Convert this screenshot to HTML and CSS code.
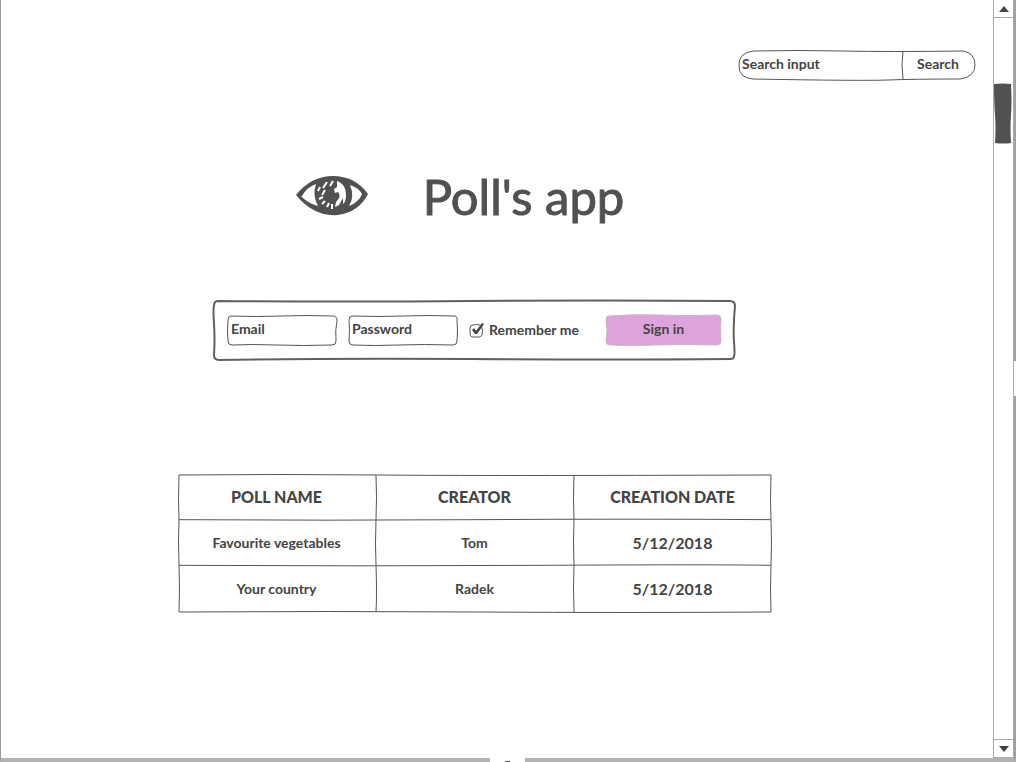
FILE: index.html
```html
<!DOCTYPE html>
<html lang="en">
<head>
<meta charset="utf-8">
<meta name="viewport" content="width=device-width, initial-scale=1">
<title>Poll's app</title>
<link rel="stylesheet" href="styles.css">
</head>
<body>
<div class="frame">
  <main class="page">
    <form class="search sketch" role="search">
      <svg class="outline" viewBox="0 0 238 30" preserveAspectRatio="none" aria-hidden="true"><path d="M15 1Q60 0 105 1T225 1Q237 3 237 15T222 29Q175 29 150 30T15 29Q1 28 1 16Q0 3 15 1ZM165 1Q163 15 165 29"/></svg>
      <input class="search-input" type="search" aria-label="Search" placeholder="Search input">
      <button class="search-button" type="submit">Search</button>
    </form>

    <header class="brand">
      <svg class="eye" viewBox="0 0 74 42" aria-hidden="true">
        <path fill="#515151" d="M1 20Q16 1 38 1Q60 1 73 19Q64 37 43 40Q19 42 1 20Z"/>
        <path fill="#fff" d="M7 21Q12 12 21 9Q17 20 23 31Q12 28 6 21ZM55 10Q64 13 67 19Q64 27 54 31Q60 22 55 10Z"/>
        <path fill="#fff" d="M42 6Q51 9 51 20Q51 27 48 29L48 23L44 30L40 32L41 27Q47 21 43 17L40 18L39 14L42 12Z"/>
        <path fill="none" stroke="#fff" stroke-width="2" d="M32 7L28 13M38 6L35 11M25 12L23 16M30 15L27 20M24 24L28 22M27 29L30 26M32 32L34 28M37 34L37 29"/>
      </svg>
      <h1 class="title">Poll's app</h1>
    </header>

    <form class="login sketch">
      <svg class="outline thick" viewBox="0 0 523 60" preserveAspectRatio="none" aria-hidden="true"><path d="M5 1Q130 2 260 1T517 1Q522 1 522 6Q520 28 521 42T521 56Q521 59 517 59Q400 60 260 59T6 60Q1 60 1 55Q2 40 1 24T1 6Q1 1 5 1Z"/></svg>
      <div class="field sketch">
        <svg class="outline" viewBox="0 0 110 31" preserveAspectRatio="none" aria-hidden="true"><path d="M4 1Q30 2 55 1T106 1Q110 1 110 6Q108 15 109 26Q109 30 105 30Q75 31 50 30T5 30Q1 30 1 26Q0 16 1 5Q1 1 4 1Z"/></svg>
        <input class="text-input" type="email" aria-label="Email" placeholder="Email">
      </div>
      <div class="field sketch">
        <svg class="outline" viewBox="0 0 110 31" preserveAspectRatio="none" aria-hidden="true"><path d="M4 1Q30 2 55 1T106 1Q110 1 109 6Q110 16 109 26Q109 30 105 30Q75 29 50 30T5 30Q1 30 1 26Q2 16 1 5Q1 1 4 1Z"/></svg>
        <input class="text-input" type="password" aria-label="Password" placeholder="Password">
      </div>
      <label class="remember">
        <span class="check sketch">
          <input class="check-input" type="checkbox" checked>
          <svg class="check-art" viewBox="0 0 16 16" aria-hidden="true"><path class="box" d="M4 3Q8 2 11 3Q13 3 13 6Q14 9 13 13Q12 15 10 15Q5 15 3 15Q1 14 1 11Q1 8 1 6Q1 3 4 3Z"/><path class="tick" d="M3 8L5 6L7 9L13 1L15 2L8 12L6 12Z"/></svg>
        </span>
        Remember me
      </label>
      <button class="sign-in sketch" type="submit">
        <svg class="outline plum" viewBox="0 0 117 32" preserveAspectRatio="none" aria-hidden="true"><path d="M4 2Q30 0 55 1T112 1Q116 1 116 5Q115 16 116 27Q116 31 112 31Q75 30 50 31T5 31Q1 31 1 27Q3 16 1 6Q1 2 4 2Z"/></svg>
        <span class="sign-in-text">Sign in</span>
      </button>
    </form>

    <div class="polls sketch">
      <svg class="outline" viewBox="0 0 594 139" preserveAspectRatio="none" aria-hidden="true"><path d="M1 1Q100 0 200 1T593 1M1 46Q150 47 300 46T593 46M1 92Q180 93 360 92T593 92M1 139Q150 138 300 139T593 139M1 1Q0 24 1 46Q0 70 1 92T1 139M198 1Q199 24 198 46Q197 70 198 92Q199 120 198 139M396 1Q395 24 396 46Q395 70 396 92Q395 116 396 139M593 1Q592 26 593 46Q594 70 593 92Q592 116 593 139"/></svg>
      <table class="poll-table">
        <thead><tr><th scope="col">POLL NAME</th><th scope="col">CREATOR</th><th scope="col">CREATION DATE</th></tr></thead>
        <tbody>
          <tr><td>Favourite vegetables</td><td>Tom</td><td class="date">5/12/2018</td></tr>
          <tr><td>Your country</td><td>Radek</td><td class="date">5/12/2018</td></tr>
        </tbody>
      </table>
    </div>
  </main>

  <aside class="scrollbar" aria-label="Scrollbar">
    <button class="arrow up" type="button" aria-label="Scroll up"><svg viewBox="0 0 10 6" aria-hidden="true"><path d="M0 6L5 0L10 6Z"/></svg></button>
    <div class="track">
      <svg class="thumb" viewBox="0 0 18 61" preserveAspectRatio="none" aria-hidden="true"><path d="M0 1Q9 0 17 1Q18 20 17 32T17 60Q9 61 1 60Q2 44 1 32T0 1Z"/></svg>
    </div>
    <button class="arrow down" type="button" aria-label="Scroll down"><svg viewBox="0 0 10 6" aria-hidden="true"><path d="M0 0H10L5 6Z"/></svg></button>
  </aside>
  <span class="notch notch-right"></span>
  <span class="notch notch-bottom"></span>
</div>
</body>
</html>
```

FILE: styles.css
```css
* { box-sizing: border-box; }

body {
  margin: 0;
  background: #fff;
  color: #444;
  font: 700 14px/20px Lato, "Liberation Sans", sans-serif;
}

input, button {
  font: inherit;
  color: inherit;
  margin: 0;
  border: 0;
  background: none;
}

input::placeholder { color: #444; opacity: 1; }

.frame {
  position: relative;
  display: flex;
  min-height: 100vh;
  border-style: solid;
  border-width: 0 2px 4px 1px;
  border-color: #fff #a0a0a0 #b2b2b2 #999;
}

.page {
  flex: 1;
  display: flex;
  flex-direction: column;
  align-items: center;
  padding: 50px 46px 40px 1px;
}

/* Hand-drawn outlines stretch with the box they surround */
.sketch { position: relative; }

.outline {
  position: absolute;
  inset: 0;
  width: 100%;
  height: 100%;
  overflow: visible;
  pointer-events: none;
  fill: none;
  stroke: #555;
  stroke-width: 1;
}

.outline path { vector-effect: non-scaling-stroke; }
.thick { stroke: #606060; stroke-width: 2; }
.plum { fill: #dda3dd; stroke: #c8b4c8; }

.search {
  display: flex;
  align-self: flex-end;
  width: 238px;
  height: 30px;
  margin-right: -29px;
}

.search-input {
  flex: 1;
  min-width: 0;
  padding: 0 4px 2px;
  appearance: none;
  outline-offset: -4px;
}

.search-button { width: 74px; padding: 0 2px 2px 0; }

.brand {
  display: flex;
  align-items: center;
  gap: 54px;
  margin: 80px 30px 0 0;
}

.eye { width: 74px; height: 42px; }

.title {
  margin: 0;
  font-size: 49px;
  line-height: 72px;
  font-weight: 400;
  -webkit-text-stroke: 1px #515151;
  color: #515151;
}

.login {
  display: flex;
  align-items: center;
  width: 523px;
  max-width: 100%;
  height: 60px;
  margin-top: 68px;
  padding: 0 14px;
}

.field { width: 110px; height: 31px; margin-right: 11px; }

.text-input {
  width: 100%;
  height: 100%;
  padding: 0 4px 4px;
}

.remember {
  display: flex;
  align-items: center;
  gap: 4px;
  white-space: nowrap;
}

.check { width: 16px; height: 16px; }

.check-input {
  display: block;
  width: 16px;
  height: 16px;
  appearance: none;
}

.check-art {
  position: absolute;
  inset: 0;
  pointer-events: none;
}

.box { fill: none; stroke: #555; }
.tick { fill: #444; }

.sign-in {
  width: 117px;
  height: 32px;
  margin-left: auto;
  padding: 0 0 2px;
}

.sign-in-text { position: relative; }

.polls {
  width: 594px;
  max-width: 100%;
  margin-top: 114px;
}

.poll-table {
  width: 100%;
  table-layout: fixed;
  border-collapse: collapse;
  text-align: center;
}

.poll-table th, .poll-table td { height: 46px; padding: 0; }
.poll-table th { font-size: 16px; font-weight: 900; }
.poll-table .date { font-size: 16px; }

.scrollbar {
  display: flex;
  flex-direction: column;
  width: 21px;
  border: 1px solid #aaa;
  border-width: 0 1px 1px;
}

.arrow {
  display: flex;
  align-items: center;
  justify-content: center;
  height: 18px;
  padding: 0;
}

.arrow svg { width: 10px; height: 6px; fill: #444; }
.up { border-bottom: 1px solid #aaa; }
.down { border-top: 1px solid #aaa; }
.track { flex: 1; padding-top: 65px; }

.thumb {
  display: block;
  width: 18px;
  height: 61px;
  fill: #515151;
}

.notch { position: absolute; background: #fff; }

.notch-right {
  top: 361px;
  right: -2px;
  width: 2px;
  height: 35px;
}

.notch-bottom {
  bottom: -4px;
  left: 489px;
  width: 35px;
  height: 4px;
}

.notch-bottom::after {
  content: "";
  position: absolute;
  left: 15px;
  bottom: 0;
  width: 5px;
  height: 1px;
  background: #555;
}
```
